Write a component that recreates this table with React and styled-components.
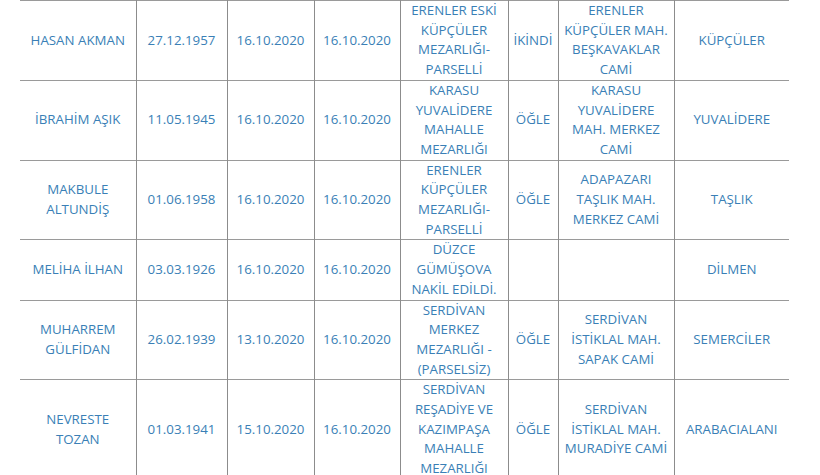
import React from "react";
import styled, { createGlobalStyle } from "styled-components";

const Global = createGlobalStyle`
  html, body { margin: 0; padding: 0; background: #ffffff; }
  body { font-family: "Open Sans", "Liberation Sans", sans-serif; overflow: hidden; }
`;

const Page = styled.div`
  width: 820px;
  height: 475px;
  overflow: hidden;
  padding-left: 20px;
  box-sizing: border-box;
`;

const Table = styled.table`
  width: 769px;
  table-layout: fixed;
  border-collapse: collapse;
  border-top: 1px solid #9a9a9a;
`;

const Row = styled.tr`
  border-bottom: 1px solid #9a9a9a;
`;

const Cell = styled.td`
  padding: 0 3px;
  text-align: center;
  vertical-align: middle;
  color: #3a7fb6;
  font-size: 13.3px;
  font-weight: 500;
  line-height: 19.7px;
  border-left: ${(p) => (p.$first ? "none" : "1px solid #8c8c8c")};
  word-wrap: break-word;
`;

const widths = [116, 91, 87, 86, 108, 50, 116, 115];

const rows = [
  ["HASAN AKMAN", "27.12.1957", "16.10.2020", "16.10.2020", "ERENLER ESKİ KÜPÇÜLER MEZARLIĞI-PARSELLİ", "İKİNDİ", "ERENLER KÜPÇÜLER MAH. BEŞKAVAKLAR CAMİ", "KÜPÇÜLER"],
  ["İBRAHİM AŞIK", "11.05.1945", "16.10.2020", "16.10.2020", "KARASU YUVALİDERE MAHALLE MEZARLIĞI", "ÖĞLE", "KARASU YUVALİDERE MAH. MERKEZ CAMİ", "YUVALİDERE"],
  ["MAKBULE ALTUNDİŞ", "01.06.1958", "16.10.2020", "16.10.2020", "ERENLER KÜPÇÜLER MEZARLIĞI-PARSELLİ", "ÖĞLE", "ADAPAZARI TAŞLIK MAH. MERKEZ CAMİ", "TAŞLIK"],
  ["MELİHA İLHAN", "03.03.1926", "16.10.2020", "16.10.2020", "DÜZCE GÜMÜŞOVA NAKİL EDİLDİ.", "", "", "DİLMEN"],
  ["MUHARREM GÜLFİDAN", "26.02.1939", "13.10.2020", "16.10.2020", "SERDİVAN MERKEZ MEZARLIĞI - (PARSELSİZ)", "ÖĞLE", "SERDİVAN İSTİKLAL MAH. SAPAK CAMİ", "SEMERCİLER"],
  ["NEVRESTE TOZAN", "01.03.1941", "15.10.2020", "16.10.2020", "SERDİVAN REŞADİYE VE KAZIMPAŞA MAHALLE MEZARLIĞI", "ÖĞLE", "SERDİVAN İSTİKLAL MAH. MURADİYE CAMİ", "ARABACIALANI"],
];

export default function App() {
  return (
    <Page>
      <Global />
      <Table>
        <colgroup>
          {widths.map((w, i) => (
            <col key={i} style={{ width: w }} />
          ))}
        </colgroup>
        <tbody>
          {rows.map((r, i) => (
            <Row key={i}>
              {r.map((c, j) => (
                <Cell key={j} $first={j === 0}>
                  {c}
                </Cell>
              ))}
            </Row>
          ))}
        </tbody>
      </Table>
    </Page>
  );
}
